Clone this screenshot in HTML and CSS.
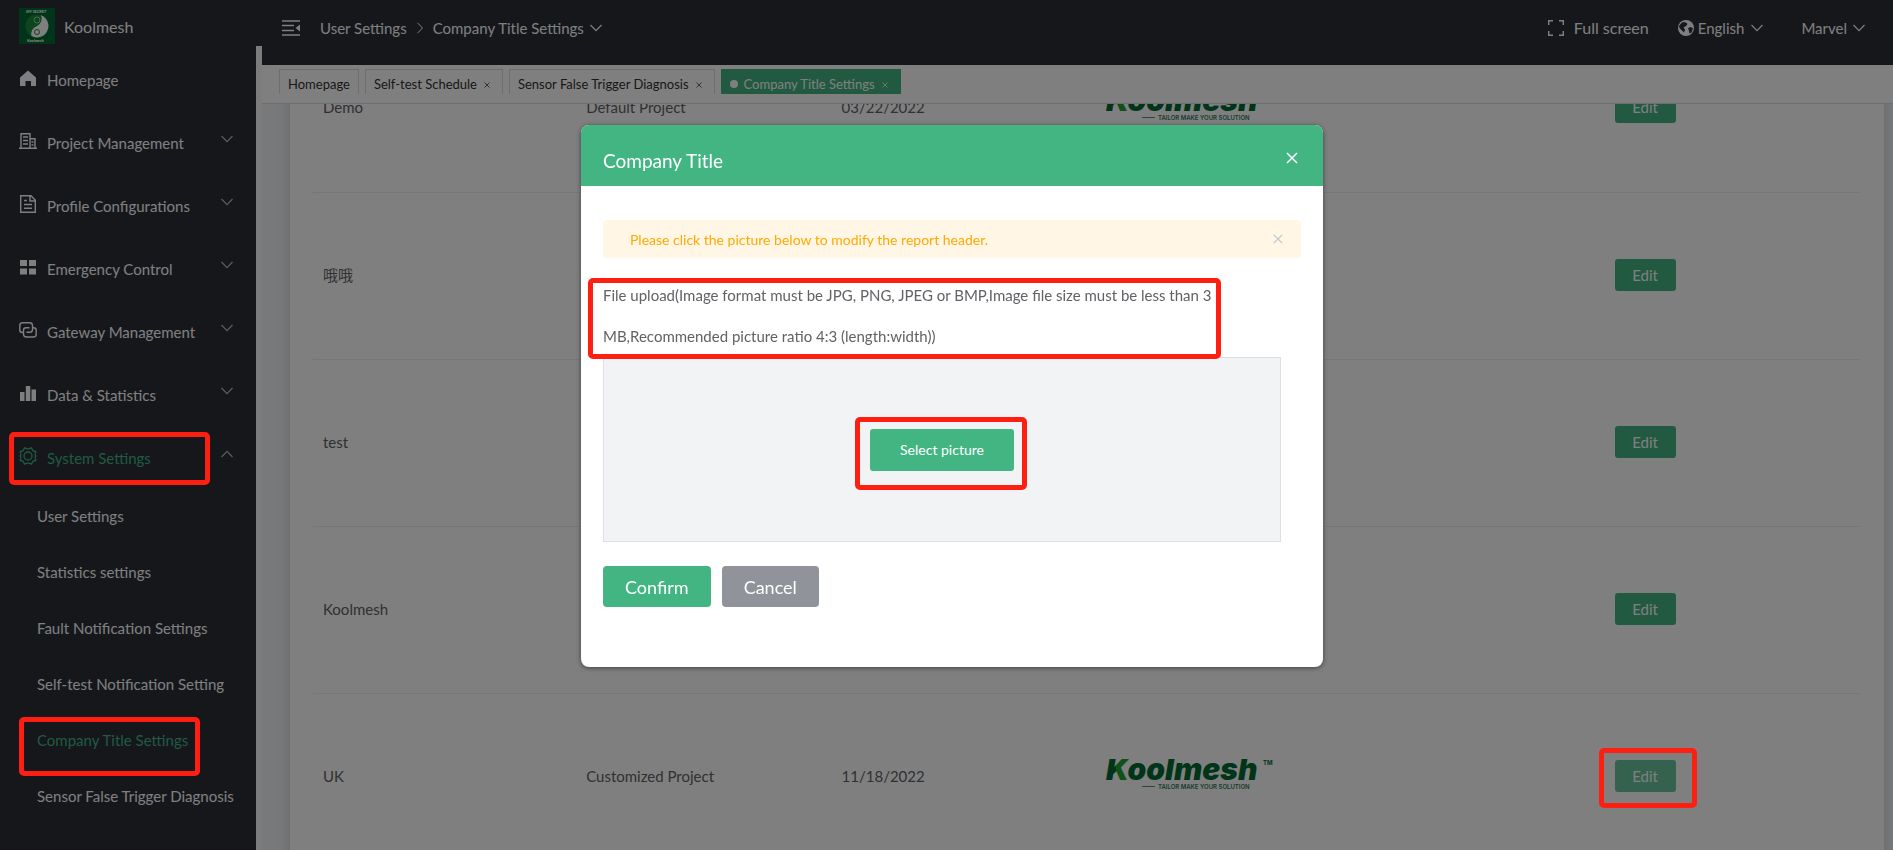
FILE: index.html
```html
<!DOCTYPE html>
<html lang="en">
<head>
  <meta charset="UTF-8">
  <meta name="viewport" content="width=device-width, initial-scale=1.0">
  <title>Koolmesh - Company Title Settings</title>
  <link rel="stylesheet" href="styles.css">
</head>
<body>

  <!-- shared icons -->
  <svg class="sprite" aria-hidden="true">
    <symbol id="i-down" viewBox="0 0 12 12"><path d="M.5 3 6 8.600 11.500 3" fill="none" stroke="currentColor" stroke-width="1.2"/></symbol>
    <symbol id="i-close" viewBox="0 0 12 12"><path d="M1 1l10 10M11 1 1 11" fill="none" stroke="currentColor" stroke-width="1.5"/></symbol>
    <linearGradient id="k" gradientUnits="userSpaceOnUse" x1="0" x2="24" y1="0" y2="0">
      <stop offset=".46" stop-color="#006a35"/><stop offset=".46" stop-color="#1ea22e"/>
    </linearGradient>
  </svg>

  <div class="app">
    <aside class="sidebar">
      <div class="brand">
        <svg width="36" height="36" viewBox="0 0 36 36">
          <rect width="36" height="36" fill="#006a35"/>
          <text class="mark-text" x="7" y="5">MY SECRET</text>
          <circle cx="18" cy="18" r="11.500" fill="#1d8a3c"/>
          <path d="M22 7.200a11.500 11.500 0 1 1-9.500 20.900c-1-6 2-8 5.500-10s6-6 4-10.900z" fill="#fff"/>
          <circle cx="18" cy="12" r="3" fill="none" stroke="#8fd0a0"/>
          <circle cx="18" cy="24" r="2.500" fill="none" stroke="#1d8a3c"/>
          <text class="mark-text" x="8" y="34">Koolmesh</text>
        </svg>
        <span>Koolmesh</span>
      </div>

      <nav class="menu">
        <a href="#" class="menu-item">
          <svg width="18" height="18" viewBox="0 0 18 18"><path d="M1 8.500 9 1.500l8 7V17h-5v-5H6.500v5H1z" fill="currentColor"/></svg>
          <span>Homepage</span>
        </a>
        <a href="#" class="menu-item">
          <svg width="18" height="18" viewBox="0 0 18 18"><path d="M0 16.300h18M2 16V1.700h9V16M11 6.700h5V16M4 5h5M4 8.500h5M4 12h5M12.500 10h2M12.500 13h2" fill="none" stroke="currentColor" stroke-width="1.400"/></svg>
          <span>Project Management</span>
          <svg class="arrow"><use href="#i-down"/></svg>
        </a>
        <a href="#" class="menu-item">
          <svg width="18" height="18" viewBox="0 0 18 18"><path d="M1.700.8H12l4.300 4.500v12H1.700zM11 1v5h5M5 5.500h3M5 9.500h8M5 13.200h8" fill="none" stroke="currentColor" stroke-width="1.400"/></svg>
          <span>Profile Configurations</span>
          <svg class="arrow"><use href="#i-down"/></svg>
        </a>
        <a href="#" class="menu-item">
          <svg width="18" height="18" viewBox="0 0 18 18"><path d="M1 2h7v6H1zM10 2h7v6h-7zM1 10.500h7v6H1zM10 10.500h7v6h-7z" fill="currentColor"/></svg>
          <span>Emergency Control</span>
          <svg class="arrow"><use href="#i-down"/></svg>
        </a>
        <a href="#" class="menu-item">
          <svg width="18" height="18" viewBox="0 0 18 18"><path d="M4.500 11.500h-1C1.500 11.500.8 10.500.8 9V4.500C.8 2.500 2 1.800 3.500 1.800h7c2 0 3 1 3 2.700v4c0 1.700-1 2.700-2.500 2.700H7.500M13.500 6.800h1c2 0 2.700 1 2.700 2.500v4c0 1.700-1 2.700-2.700 2.700H7.500c-2 0-3-1-3-2.700v-4c0-1.500 1-2.500 2.500-2.500h3.500" fill="none" stroke="currentColor" stroke-width="1.400"/></svg>
          <span>Gateway Management</span>
          <svg class="arrow"><use href="#i-down"/></svg>
        </a>
        <a href="#" class="menu-item">
          <svg width="18" height="18" viewBox="0 0 18 18"><path d="M1 8h4.500v9H1zM6.800 2h4.500v15H6.800zM12.500 5.500H17V17h-4.500z" fill="currentColor"/></svg>
          <span>Data &amp; Statistics</span>
          <svg class="arrow"><use href="#i-down"/></svg>
        </a>
        <a href="#" class="menu-item active">
          <svg width="18" height="18" viewBox="0 0 18 18"><g fill="none" stroke="currentColor" stroke-width="1.300"><path d="M5.500.9Q9 2.700 12.500.9L14 3.700l2.800.9Q15 9 17.400 9 15 9.500 16.800 13.400l-2.800.9-1.500 2.800Q9 15.300 5.500 17.100L4 14.300l-2.800-.9Q3 9 .6 9 3 8.500 1.200 4.600L4 3.700z"/><circle cx="9" cy="9" r="4"/></g></svg>
          <span>System Settings</span>
          <svg class="arrow up"><use href="#i-down"/></svg>
          <i class="mark mark-system"></i>
        </a>
        <div class="submenu">
          <a href="#">User Settings</a>
          <a href="#">Statistics settings</a>
          <a href="#">Fault Notification Settings</a>
          <a href="#">Self-test Notification Setting</a>
          <a href="#" class="active">Company Title Settings<i class="mark mark-company"></i></a>
          <a href="#">Sensor False Trigger Diagnosis</a>
        </div>
      </nav>
    </aside>

    <div class="main">
      <header class="topbar">
        <svg class="fold" width="18" height="18" viewBox="0 0 18 18"><path d="M0 2h18M0 6.500h12M0 11.500h12M0 16h18" stroke="currentColor" stroke-width="1.500"/><path d="M18 5.500v7L13.500 9z" fill="currentColor"/></svg>
        <a href="#">User Settings</a>
        <svg class="sep" width="8" height="12" viewBox="0 0 8 12"><path d="M1.500.8 6.500 6l-5 5.200" fill="none" stroke="currentColor"/></svg>
        <a href="#">Company Title Settings</a>
        <svg class="caret"><use href="#i-down"/></svg>

        <div class="tools">
          <button class="fullscreen">
            <svg width="16" height="16" viewBox="0 0 16 16"><path d="M.7 5V.7H5M11 .7h4.300V5M15.300 11v4.300H11M5 15.300H.7V11" fill="none" stroke="currentColor" stroke-width="1.400"/></svg>
            Full screen
          </button>
          <button class="language">
            <svg width="16" height="16" viewBox="0 0 16 16"><circle cx="8" cy="8" r="8" fill="currentColor"/><path d="M3 3.500 5 2l3 .5L9.500 4 8 6 5.500 7.500 7 9.500l-1 3L3.500 10 1.500 8 1 6zM10 8l3-1 2 1.500-1.500 4-2 1L11 11z" fill="#2a2e36"/></svg>
            English
            <svg class="caret"><use href="#i-down"/></svg>
          </button>
          <button>Marvel <svg class="caret"><use href="#i-down"/></svg></button>
        </div>
      </header>

      <div class="tabs">
        <a href="#" class="tab">Homepage</a>
        <a href="#" class="tab">Self-test Schedule <svg><use href="#i-close"/></svg></a>
        <a href="#" class="tab">Sensor False Trigger Diagnosis <svg><use href="#i-close"/></svg></a>
        <a href="#" class="tab active"><i class="dot"></i>Company Title Settings <svg><use href="#i-close"/></svg></a>
      </div>

      <div class="content">
        <div class="card">
          <table>
            <colgroup>
              <col class="c-name"><col class="c-type"><col class="c-date"><col class="c-logo"><col>
            </colgroup>
            <tbody>
              <tr>
                <td>Demo</td><td>Default Project</td><td>03/22/2022</td>
                <td>
                  <svg class="logo" viewBox="0 0 170 34">
                    <text class="logo-word" x="1" y="21"><tspan fill="url(#k)">K</tspan>oolmesh</text>
                    <text class="logo-tm" x="158" y="6">TM</text>
                    <path d="M37 27.500h13" stroke="#4a9070"/>
                    <text class="logo-tag" x="53" y="30">TAILOR MAKE YOUR SOLUTION</text>
                  </svg>
                </td>
                <td class="action"><button class="edit">Edit</button></td>
              </tr>
              <tr>
                <td>哦哦</td><td></td><td></td><td></td>
                <td class="action"><button class="edit">Edit</button></td>
              </tr>
              <tr>
                <td>test</td><td></td><td></td><td></td>
                <td class="action"><button class="edit">Edit</button></td>
              </tr>
              <tr>
                <td>Koolmesh</td><td></td><td></td><td></td>
                <td class="action"><button class="edit">Edit</button></td>
              </tr>
              <tr>
                <td>UK</td><td>Customized Project</td><td>11/18/2022</td>
                <td>
                  <svg class="logo" viewBox="0 0 170 34">
                    <text class="logo-word" x="1" y="21"><tspan fill="url(#k)">K</tspan>oolmesh</text>
                    <text class="logo-tm" x="158" y="6">TM</text>
                    <path d="M37 27.500h13" stroke="#4a9070"/>
                    <text class="logo-tag" x="53" y="30">TAILOR MAKE YOUR SOLUTION</text>
                  </svg>
                </td>
                <td class="action"><span class="marked"><button class="edit focus">Edit</button><i class="mark mark-edit"></i></span></td>
              </tr>
            </tbody>
          </table>
        </div>
      </div>
    </div>
  </div>

  <!-- company title dialog -->
  <div class="overlay">
    <div class="dialog" role="dialog" aria-label="Company Title">
      <div class="dialog-header">
        <h2>Company Title</h2>
        <button class="close" aria-label="Close"><svg width="12" height="12"><use href="#i-close"/></svg></button>
      </div>
      <div class="dialog-body">
        <div class="alert">
          <span>Please click the picture below to modify the report header.</span>
          <button class="close" aria-label="Dismiss"><svg width="10" height="10"><use href="#i-close"/></svg></button>
        </div>
        <p class="hint">File upload(Image format must be JPG, PNG, JPEG or BMP,Image file size must be less than 3 MB,Recommended picture ratio 4:3 (length:width))<i class="mark mark-hint"></i></p>
        <div class="upload">
          <span class="marked"><button class="select">Select picture</button><i class="mark mark-select"></i></span>
        </div>
        <div class="buttons">
          <button class="confirm">Confirm</button>
          <button class="cancel">Cancel</button>
        </div>
      </div>
    </div>
  </div>

</body>
</html>
```
FILE: styles.css
```css
* {
  box-sizing: border-box;
}

body {
  margin: 0;
  font-family: Lato, "Noto Sans CJK SC", sans-serif;
  font-size: 15px;
  color: #606266;
  background-color: #f0f2f5;
}

a {
  color: inherit;
  text-decoration: none;
}

button {
  padding: 0;
  border: none;
  background: none;
  color: inherit;
  font: inherit;
  cursor: pointer;
}

svg {
  flex: none;
}

.sprite {
  position: absolute;
  width: 0;
  height: 0;
}

.app {
  display: flex;
  height: 100vh;
  overflow: hidden;
  background-color: #2a2e36;
}

/* sidebar */
.sidebar {
  flex: none;
  width: 262px;
  color: #fff;
}

.brand {
  display: flex;
  align-items: center;
  gap: 9px;
  height: 46px;
  padding: 6px 19px 0;
  font-size: 16px;
}

.mark-text {
  font-size: 4px;
  font-weight: 900;
  font-style: italic;
  fill: #fff;
}

.menu {
  height: calc(100vh - 46px);
  padding-top: 2px;
  border-right: 6px solid #f8f8f8;
}

.menu-item {
  position: relative;
  display: flex;
  align-items: center;
  height: 63px;
  padding: 0 23px 0 19px;
  gap: 10px;
}

.menu-item > svg {
  margin-bottom: 4px;
}

.arrow {
  width: 12px;
  height: 12px;
  margin-left: auto;
  color: #bbb;
}

.menu-item .arrow {
  margin-bottom: 8px;
}

.arrow.up {
  transform: rotate(180deg);
}

.submenu {
  margin-top: -1px;
}

.submenu a {
  position: relative;
  display: block;
  padding-left: 37px;
  line-height: 56px;
}

.menu .active {
  color: #42b583;
}

/* header */
.main {
  flex: 1;
  display: flex;
  flex-direction: column;
  min-width: 0;
}

.topbar {
  display: flex;
  align-items: center;
  height: 65px;
  padding: 0 28px 10px 20px;
  color: #fff;
}

.fold {
  margin-right: 20px;
}

.sep {
  margin: 0 9px;
}

.caret {
  width: 12px;
  height: 12px;
  margin-left: 6px;
}

.tools {
  display: flex;
  align-items: center;
  margin-left: auto;
}

.tools button {
  display: flex;
  align-items: center;
}

.tools .fullscreen {
  gap: 10px;
  margin-right: 29px;
  font-size: 16px;
}

.tools .language {
  gap: 4px;
  margin-right: 38px;
}

.language .caret {
  margin-left: 3px;
}

.tabs {
  display: flex;
  gap: 6px;
  height: 39px;
  padding: 4px 17px 9px;
  background-color: #fff;
  border-bottom: 1px solid #d8dce5;
}

.tab {
  display: flex;
  align-items: center;
  overflow: hidden;
  padding: 4px 8px 0;
  border: 1px solid #d8dce5;
  border-bottom: none;
  color: #303133;
  font-size: 13px;
  white-space: nowrap;
}

.tab svg {
  width: 6px;
  height: 6px;
  margin: 2px 4px 0 7px;
}

.tab.active {
  border-color: #42b583;
  background-color: #42b583;
  color: #fff;
}

.dot {
  width: 8px;
  height: 8px;
  margin-right: 6px;
  border-radius: 50%;
  background-color: #fff;
}

/* table */
.content {
  flex: 1;
  overflow: hidden;
  padding: 0 9px 0 28px;
  background-color: #f0f2f5;
}

.card {
  margin-top: -79px;
  padding: 0 23px;
  background-color: #fff;
  box-shadow: 0 2px 12px rgba(0, 0, 0, 0.15);
}

table {
  width: 100%;
  border-collapse: collapse;
  table-layout: fixed;
}

.c-name {
  width: 17%;
}

.c-type {
  width: 16.5%;
}

.c-date {
  width: 17%;
}

.c-logo {
  width: 22%;
}

td {
  height: 167px;
  padding: 0 10px 2px;
  border-bottom: 1px solid #ebeef5;
}

.logo {
  display: block;
  width: 170px;
  height: 34px;
}

.logo-word {
  font-family: Inter, sans-serif;
  font-size: 30px;
  font-weight: 900;
  font-style: italic;
  fill: #006a35;
}

.logo-tm {
  font-family: Inter, sans-serif;
  font-size: 6px;
  font-weight: 700;
  fill: #006a35;
}

.logo-tag {
  font-family: Inter, sans-serif;
  font-size: 6px;
  font-weight: 600;
  fill: #2a7a55;
}

td.action {
  padding-right: 16px;
  text-align: center;
}

.edit {
  width: 61px;
  height: 32px;
  border-radius: 3px;
  background-color: #42b583;
  color: #fff;
}

.edit.focus {
  background-color: #68c49c;
}

/* dialog */
.overlay {
  position: fixed;
  inset: 0;
  display: flex;
  justify-content: center;
  align-items: flex-start;
  padding: 125px 0 0 11px;
  background-color: rgba(0, 0, 0, 0.5);
}

.dialog {
  width: 742px;
  border-radius: 8px;
  background-color: #fff;
  box-shadow: 0 1px 5px rgba(0, 0, 0, 0.5);
}

.dialog-header {
  display: flex;
  align-items: center;
  justify-content: space-between;
  height: 61px;
  padding: 10px 25px 0 22px;
  border-radius: 8px 8px 0 0;
  background-color: #42b583;
  color: #fff;
}

.dialog-header h2 {
  margin: 0;
  font-size: 19px;
  font-weight: 400;
}

.dialog-header .close {
  margin-bottom: 6px;
}

.close {
  display: flex;
}

.dialog-body {
  padding: 34px 22px 60px;
}

.alert {
  display: flex;
  align-items: center;
  justify-content: space-between;
  height: 38px;
  padding: 0 18px 0 27px;
  border-radius: 4px;
  background-color: #fff6e6;
  color: #ffa900;
  font-size: 14px;
}

.alert .close {
  color: #c0c4cc;
}

.hint {
  position: relative;
  width: 620px;
  margin: 17px 0 0;
  line-height: 41px;
}

.upload {
  display: flex;
  align-items: center;
  justify-content: center;
  width: 678px;
  height: 185px;
  border: 1px solid #dcdfe6;
  background-color: #f1f3f5;
}

.select {
  width: 144px;
  height: 42px;
  border-radius: 3px;
  background-color: #42b583;
  color: #fff;
  font-size: 14px;
}

.buttons {
  display: flex;
  gap: 11px;
  margin-top: 24px;
}

.buttons button {
  height: 41px;
  padding: 0 22px;
  border-radius: 4px;
  color: #fff;
  font-size: 18px;
}

.buttons .confirm {
  background-color: #42b583;
}

.buttons .cancel {
  background-color: #909399;
}

/* red frames, kept above the dialog overlay */
.marked {
  position: relative;
  display: inline-block;
}

.mark {
  position: absolute;
  z-index: 20;
  border: 5px solid #ff1e12;
  border-radius: 5px;
  pointer-events: none;
}

.mark-system {
  inset: 6px 46px 4px 9px;
}

.mark-company {
  inset: 5px 56px -8px 19px;
}

.mark-hint {
  inset: 3px 2px -2px -15px;
}

.mark-select {
  inset: -12px -13px -19px -15px;
}

.mark-edit {
  inset: -12px -21px -16px -16px;
}
```
